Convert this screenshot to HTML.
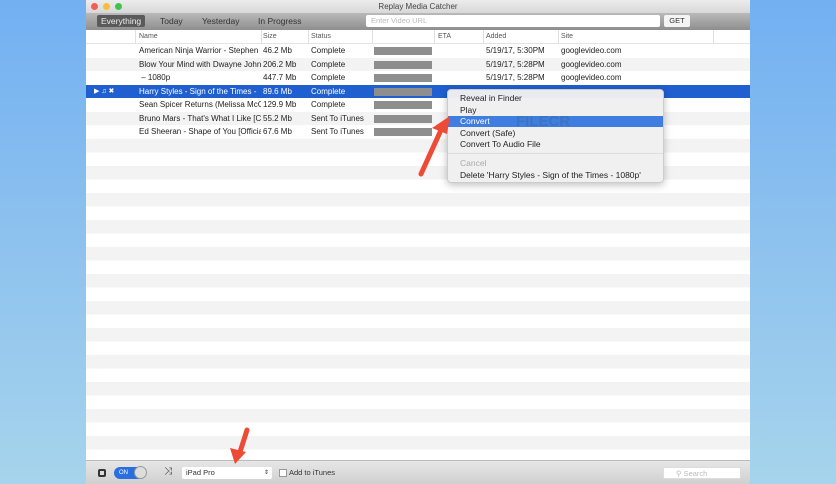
<!DOCTYPE html>
<html><head><style>
*{margin:0;padding:0;box-sizing:border-box}
body{width:836px;height:484px;overflow:hidden;background:linear-gradient(180deg,#72b0f2 0%,#8ec2ee 50%,#a6d4ec 100%);font-family:"Liberation Sans",sans-serif;position:relative}
.win{position:absolute;left:86px;top:0;width:664px;height:484px;background:#fff}
.title{position:absolute;left:0;top:0;width:664px;height:13px;background:linear-gradient(#ececec,#d8d8d8);font-size:8px;color:#444;text-align:center;line-height:13px}
.dot{position:absolute;top:3px;width:7px;height:7px;border-radius:50%}
.tabs{position:absolute;left:0;top:13px;width:664px;height:17px;background:linear-gradient(#b9b9b9,#8e8e8e);font-size:8.5px;color:#333}
.tab{position:absolute;top:2px;height:12px;line-height:12px;padding:0 4px}
.tab.sel{background:#5a5a5a;color:#eee;border-radius:2px}
.url{position:absolute;left:280px;top:2px;width:294px;height:12px;background:#fff;border-radius:2px;font-size:7.5px;color:#bbb;line-height:12px;padding-left:5px}
.get{position:absolute;left:578px;top:2px;width:26px;height:12px;background:#f4f4f4;border-radius:2px;font-size:7.5px;text-align:center;line-height:12px;color:#333}
.hdr{position:absolute;left:0;top:30px;width:664px;height:14px;background:#fff;border-bottom:1px solid #e4e4e4;font-size:7px;color:#555}
.hdr span{position:absolute;top:3px}
.hdr i{position:absolute;top:0;width:1px;height:13px;background:#e0e0e0}
.row{position:absolute;left:0;width:664px;height:13.5px;font-size:8px;color:#222;line-height:13.5px}
.row span{position:absolute;white-space:nowrap;overflow:hidden}
.row b{position:absolute;left:288px;top:3px;width:58px;height:8px;background:#8e8e8e}
.row.s{background:#1f5fcf;color:#fff}
.g{background:#f3f3f3}
.bot{position:absolute;left:0;top:460px;width:664px;height:24px;background:linear-gradient(#e6e6e6,#d0d0d0);border-top:1px solid #bbb;font-size:7.5px;color:#333}
.menu{position:absolute;left:447px;top:89px;width:217px;height:94px;background:rgba(240,240,240,.97);border:1px solid #ccc;border-radius:4px;box-shadow:0 2px 8px rgba(0,0,0,.25);font-size:8.5px;color:#222}
.mi{position:absolute;left:0;width:215px;height:11px;line-height:11px;padding-left:12px}
</style></head><body>
<div class="win">
<div class="title"><div class="dot" style="left:5px;background:#f25e57"></div><div class="dot" style="left:17px;background:#f6be3b"></div><div class="dot" style="left:29px;background:#3fc44a"></div>Replay Media Catcher</div>
<div class="tabs"><div class="tab sel" style="left:11px">Everything</div><div class="tab" style="left:70px">Today</div><div class="tab" style="left:112px">Yesterday</div><div class="tab" style="left:168px">In Progress</div><div class="url">Enter Video URL</div><div class="get">GET</div></div>
<div class="hdr"><span style="left:53px">Name</span><span style="left:177px">Size</span><span style="left:225px">Status</span><span style="left:352px">ETA</span><span style="left:400px">Added</span><span style="left:475px">Site</span>
<i style="left:49px"></i><i style="left:175px"></i><i style="left:222px"></i><i style="left:286px"></i><i style="left:348px"></i><i style="left:397px"></i><i style="left:472px"></i><i style="left:627px"></i></div>
<div id="rows"></div>
<div class="row" style="top:44px"><span style="left:53px;width:122px">American Ninja Warrior - Stephen</span><span style="left:177px">46.2 Mb</span><span style="left:225px">Complete</span><b></b><span style="left:400px">5/19/17, 5:30PM</span><span style="left:475px">googlevideo.com</span></div>
<div class="row g" style="top:57.5px"><span style="left:53px;width:122px">Blow Your Mind with Dwayne John</span><span style="left:177px">206.2 Mb</span><span style="left:225px">Complete</span><b></b><span style="left:400px">5/19/17, 5:28PM</span><span style="left:475px">googlevideo.com</span></div>
<div class="row" style="top:71px"><span style="left:53px">&nbsp;– 1080p</span><span style="left:177px">447.7 Mb</span><span style="left:225px">Complete</span><b></b><span style="left:400px">5/19/17, 5:28PM</span><span style="left:475px">googlevideo.com</span></div>
<div class="row s" style="top:84.5px"><span style="left:8px;font-size:7px">▶ ♫ ✖</span><span style="left:53px;width:122px">Harry Styles - Sign of the Times -</span><span style="left:177px">89.6 Mb</span><span style="left:225px">Complete</span><b></b></div>
<div class="row" style="top:98px"><span style="left:53px;width:122px">Sean Spicer Returns (Melissa McCa</span><span style="left:177px">129.9 Mb</span><span style="left:225px">Complete</span><b></b></div>
<div class="row g" style="top:111.5px"><span style="left:53px;width:122px">Bruno Mars - That's What I Like [C</span><span style="left:177px">55.2 Mb</span><span style="left:225px">Sent To iTunes</span><b></b></div>
<div class="row" style="top:125px"><span style="left:53px;width:122px">Ed Sheeran - Shape of You [Officia</span><span style="left:177px">67.6 Mb</span><span style="left:225px">Sent To iTunes</span><b></b></div>
<div style="position:absolute;left:0;top:138.5px;width:664px;height:321.5px;background:repeating-linear-gradient(#f3f3f3 0,#f3f3f3 13.5px,#fff 13.5px,#fff 27px)"></div>
<div class="bot">
<div style="position:absolute;left:12px;top:8px;width:8px;height:8px;border:2px solid #333;border-radius:2px"></div>
<div style="position:absolute;left:28px;top:6px;width:32px;height:12px;border-radius:6px;background:#2a6fe0;color:#fff;font-size:6px;line-height:12px;padding-left:5px">ON</div>
<div style="position:absolute;left:48px;top:5px;width:13px;height:13px;border-radius:50%;background:#ddd;border:1px solid #999"></div>
<div style="position:absolute;left:78px;top:5px;font-size:10px">⤨</div>
<div style="position:absolute;left:96px;top:6px;width:90px;height:12px;background:#fff;border-radius:2px;padding-left:4px;line-height:12px">iPad Pro<span style="position:absolute;right:3px;font-size:6px">⇕</span></div>
<div style="position:absolute;left:193px;top:8px;width:8px;height:8px;background:#fff;border:1px solid #999"></div>
<div style="position:absolute;left:203px;top:6px;line-height:12px">Add to iTunes</div>
<div style="position:absolute;left:577px;top:6px;width:78px;height:12px;background:#fff;border:1px solid #ddd;border-radius:2px;color:#bbb;line-height:11px;padding-left:12px">⚲ Search</div>
</div>
</div>
<div class="menu">
<div class="mi" style="top:3px">Reveal in Finder</div>
<div class="mi" style="top:15px">Play</div>
<div class="mi" style="top:26px;background:#3f7de0;color:#fff">Convert</div>
<div class="mi" style="top:38px">Convert (Safe)</div>
<div class="mi" style="top:49px">Convert To Audio File</div>
<div style="position:absolute;left:0;top:63px;width:215px;height:1px;background:#ddd"></div>
<div class="mi" style="top:68px;color:#aaa">Cancel</div>
<div class="mi" style="top:80px">Delete 'Harry Styles - Sign of the Times - 1080p'</div>
</div>
<div style="position:absolute;left:516px;top:113px;font-size:15px;font-weight:bold;color:rgba(60,110,170,.6)">FILECR</div>
<svg style="position:absolute;left:0;top:0" width="836" height="484">
<path d="M421 174 L441 130" stroke="#ee4b36" stroke-width="5" stroke-linecap="round"/>
<path d="M450 116 L432 128 L447 134 Z" fill="#ee4b36"/>
<path d="M247 430 L240 452" stroke="#ee4b36" stroke-width="5" stroke-linecap="round"/>
<path d="M235 464 L230 448 L246 452 Z" fill="#ee4b36"/>
</svg>
</body></html>
